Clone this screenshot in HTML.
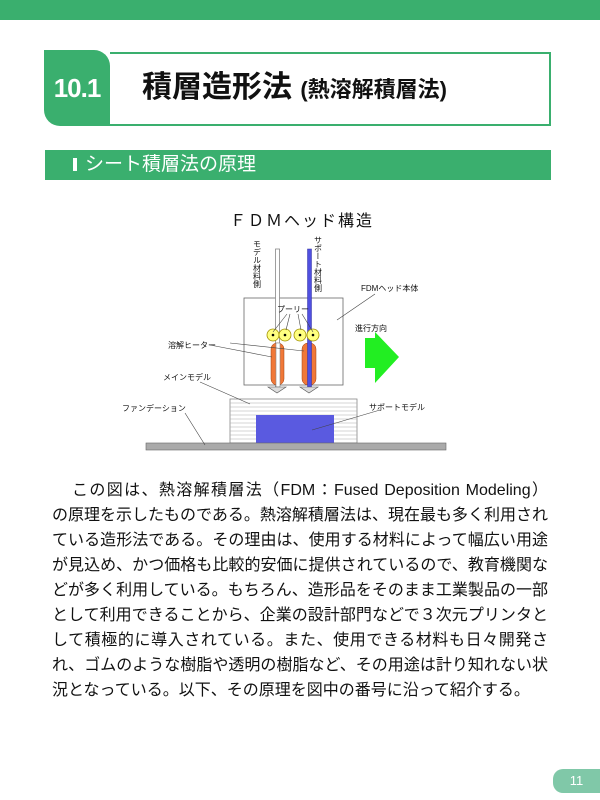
<!DOCTYPE html>
<html><head><meta charset="utf-8"><style>
body{margin:0;width:600px;height:800px;background:#fff;position:relative;overflow:hidden;font-family:"Liberation Sans","Noto Sans CJK JP",sans-serif}
.top{position:absolute;left:0;top:0;width:600px;height:20px;background:#3aaf6e}
.num{position:absolute;left:44px;top:50px;width:66px;height:76px;background:#3aaf6e;border-radius:0 16px 0 16px;color:#fff;font-weight:bold;font-size:26px;line-height:76px;text-align:center;letter-spacing:-1px}
.tbox{position:absolute;left:110px;top:52px;width:439px;height:70px;border:2px solid #3aaf6e;border-left:none}
.ttl{position:absolute;left:142px;top:68px;font-size:30px;font-weight:bold;color:#111;white-space:nowrap;line-height:40px}
.ttl span{font-size:22px}
.sec{position:absolute;left:45px;top:150px;width:506px;height:30px;background:#3aaf6e;color:#fff;font-size:19px;line-height:30px}
.sec b{display:inline-block;width:4px;height:13px;background:#fff;margin:0 8px 0 28px;vertical-align:-1px}
.body{position:absolute;left:52px;top:478px;width:496px;font-size:16px;color:#111}
.body div{height:25px;line-height:25px;text-align:justify;text-align-last:justify;white-space:nowrap}
.pg{position:absolute;left:553px;top:769px;width:47px;height:24px;background:#80c8a8;border-radius:10px 0 0 10px;color:#fff;font-size:13px;line-height:24px;text-align:center}
svg{position:absolute;left:0;top:0}
</style></head><body>
<div class="top"></div>
<div class="tbox"></div>
<div class="num">10.1</div>
<div class="ttl">積層造形法 <span>(熱溶解積層法)</span></div>
<div class="sec"><b></b>シート積層法の原理</div>
<svg width="600" height="470" font-family="Liberation Sans,Noto Sans CJK JP,sans-serif">
<text x="230" y="226" font-size="16" fill="#111" letter-spacing="2">ＦＤＭヘッド構造</text>
<rect x="244" y="298" width="99" height="87" fill="#fff" stroke="#666" stroke-width="0.8"/>
<rect x="275.5" y="249" width="4" height="140" fill="#fff" stroke="#888" stroke-width="0.8"/>
<rect x="271" y="343" width="13" height="42" rx="6" fill="#f07838" stroke="#a04010" stroke-width="0.5"/>
<rect x="302" y="343" width="14" height="42" rx="6" fill="#f07838" stroke="#a04010" stroke-width="0.5"/>
<rect x="276" y="343" width="4" height="44" fill="#fff" stroke="#888" stroke-width="0.6"/>
<rect x="307.5" y="249" width="4" height="138" fill="#5050e0" stroke="#3030a0" stroke-width="0.5"/>
<g fill="#ffff80" stroke="#a09000" stroke-width="0.8"><circle cx="273" cy="335" r="6"/><circle cx="285" cy="335" r="6"/><circle cx="300" cy="335" r="6"/><circle cx="313" cy="335" r="6"/></g>
<g fill="#000"><circle cx="273" cy="335" r="1.3"/><circle cx="285" cy="335" r="1.3"/><circle cx="300" cy="335" r="1.3"/><circle cx="313" cy="335" r="1.3"/></g>
<path d="M268 387h18l-9 6z M300 387h18l-9 6z" fill="#ddd" stroke="#555" stroke-width="0.6"/>
<path d="M365 338H375V332L399 357L375 383V368H365Z" fill="#22ee22"/>
<rect x="230" y="399" width="127" height="44" fill="#fff" stroke="#888" stroke-width="0.8"/>
<g stroke="#aaa" stroke-width="0.6"><path d="M230 403h127M230 407h127M230 411h127M230 415h127M230 419h127M230 423h127M230 427h127M230 431h127M230 435h127M230 439h127"/></g>
<rect x="256" y="415" width="78" height="28" fill="#5a5ae0"/>
<rect x="146" y="443" width="300" height="7" fill="#aaa" stroke="#666" stroke-width="0.6"/>
<g font-size="8" fill="#111">
<text x="257" y="240" writing-mode="tb">モデル材料側</text>
<text x="318" y="236" writing-mode="tb">サポート材料側</text>
<text x="361" y="291">FDMヘッド本体</text>
<text x="277" y="312">プーリー</text>
<text x="355" y="331">進行方向</text>
<text x="168" y="348">溶解ヒーター</text>
<text x="163" y="380">メインモデル</text>
<text x="122" y="411">ファンデーション</text>
<text x="369" y="410">サポートモデル</text>
</g>
<g stroke="#444" stroke-width="0.6" fill="none"><path d="M375 294L337 320M287 314l-14 18M290 314l-4 16M298 314l3 16M302 314l11 18M210 345l62 12M230 343l74 8M200 382l50 22M185 413l20 32M380 410l-68 20"/></g>
</svg>
<div class="body">
<div style="padding-left:20px">この図は、熱溶解積層法（FDM：Fused Deposition Modeling）</div>
<div>の原理を示したものである。熱溶解積層法は、現在最も多く利用され</div>
<div>ている造形法である。その理由は、使用する材料によって幅広い用途</div>
<div>が見込め、かつ価格も比較的安価に提供されているので、教育機関な</div>
<div>どが多く利用している。もちろん、造形品をそのまま工業製品の一部</div>
<div>として利用できることから、企業の設計部門などで３次元プリンタと</div>
<div>して積極的に導入されている。また、使用できる材料も日々開発さ</div>
<div>れ、ゴムのような樹脂や透明の樹脂など、その用途は計り知れない状</div>
<div style="text-align-last:left">況となっている。以下、その原理を図中の番号に沿って紹介する。</div>
</div>
<div class="pg">11</div>
</body></html>
